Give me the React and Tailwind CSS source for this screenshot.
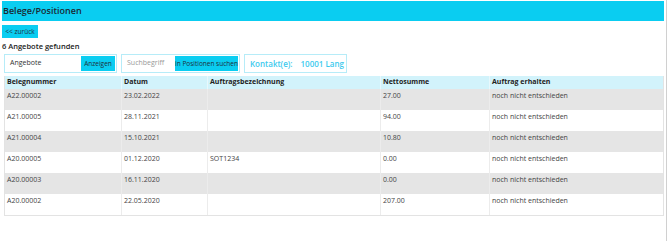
import React from "react";

const rows = [
  ["A22.00002", "23.02.2022", "", "27.00", "noch nicht entschieden"],
  ["A21.00005", "28.11.2021", "", "94.00", "noch nicht entschieden"],
  ["A21.00004", "15.10.2021", "", "10.80", "noch nicht entschieden"],
  ["A20.00005", "01.12.2020", "SOT1234", "0.00", "noch nicht entschieden"],
  ["A20.00003", "16.11.2020", "", "0.00", "noch nicht entschieden"],
  ["A20.00002", "22.05.2020", "", "207.00", "noch nicht entschieden"],
];

const cols = "grid grid-cols-[116px_86px_173px_109px_176px]";

export default function App() {
  return (
    <div
      className="relative w-[667px] h-[241px] bg-white overflow-hidden border-r border-[#d0d0d0]"
      style={{ fontFamily: '"Open Sans", "Noto Sans", sans-serif' }}
    >
      <div className="pt-[1px] pl-[2px] pr-[2px]">
        <div className="h-[20px] bg-[#0acdf1] flex items-center pl-[1px] text-[9px] font-semibold text-[#1b2a33]">
          Belege/Positionen
        </div>
        <div className="mt-[4px] w-[36px] h-[13px] bg-[#0acdf1] flex items-center justify-center text-[6.5px] text-[#1f2f3a]">
          &lt;&lt; zurück
        </div>
        <div className="mt-[4px] text-[7.5px] font-semibold text-[#222] leading-[9px]">
          6 Angebote gefunden
        </div>
      </div>
      <div className="ml-[4px] mt-[3px] flex gap-[4px] h-[19px]">
        <div className="w-[113px] border border-[#b6ecf8] flex items-center pl-[5px] pr-[1px]">
          <span className="flex-1 text-[7px] text-[#333]">Angebote</span>
          <span className="h-[15px] w-[34px] bg-[#0acdf1] flex items-center justify-center text-[6.5px] text-[#1f2f3a]">
            Anzeigen
          </span>
        </div>
        <div className="w-[119px] border border-[#b6ecf8] flex items-center pl-[5px] pr-[1px]">
          <span className="flex-1 text-[7px] text-[#999]">Suchbegriff</span>
          <span className="h-[15px] w-[63px] bg-[#0acdf1] flex items-center justify-center text-[6.5px] text-[#1f2f3a]">
            in Positionen suchen
          </span>
        </div>
        <div className="w-[103px] border border-[#b6ecf8] flex items-center pl-[5px] gap-[8px] text-[8px] font-semibold text-[#3ccaee] whitespace-nowrap">
          <span>Kontakt(e):</span>
          <span>10001 Lang</span>
        </div>
      </div>
      <div className="ml-[4px] mt-[3px] w-[660px] border border-[#e3e3e3] border-t-0">
        <div className={`${cols} h-[13px] bg-[#d2f3fb] text-[7px] font-bold text-[#222]`}>
          {["Belegnummer", "Datum", "Auftragsbezeichnung", "Nettosumme", "Auftrag erhalten"].map((h, i) => (
            <div key={h} className={`pl-[2px] flex items-center ${i > 0 ? "border-l border-[#e8f8fc]" : ""}`}>
              {h}
            </div>
          ))}
        </div>
        {rows.map((r, ri) => (
          <div
            key={ri}
            className={`${cols} h-[21px] text-[7px] text-[#444] ${ri % 2 === 0 ? "bg-[#e5e5e5]" : "bg-white"}`}
          >
            {r.map((c, i) => (
              <div key={i} className={`pl-[2px] pt-[2px] leading-[9px] ${i > 0 ? "border-l border-[#ececec]" : ""}`}>
                {c}
              </div>
            ))}
          </div>
        ))}
      </div>
    </div>
  );
}
